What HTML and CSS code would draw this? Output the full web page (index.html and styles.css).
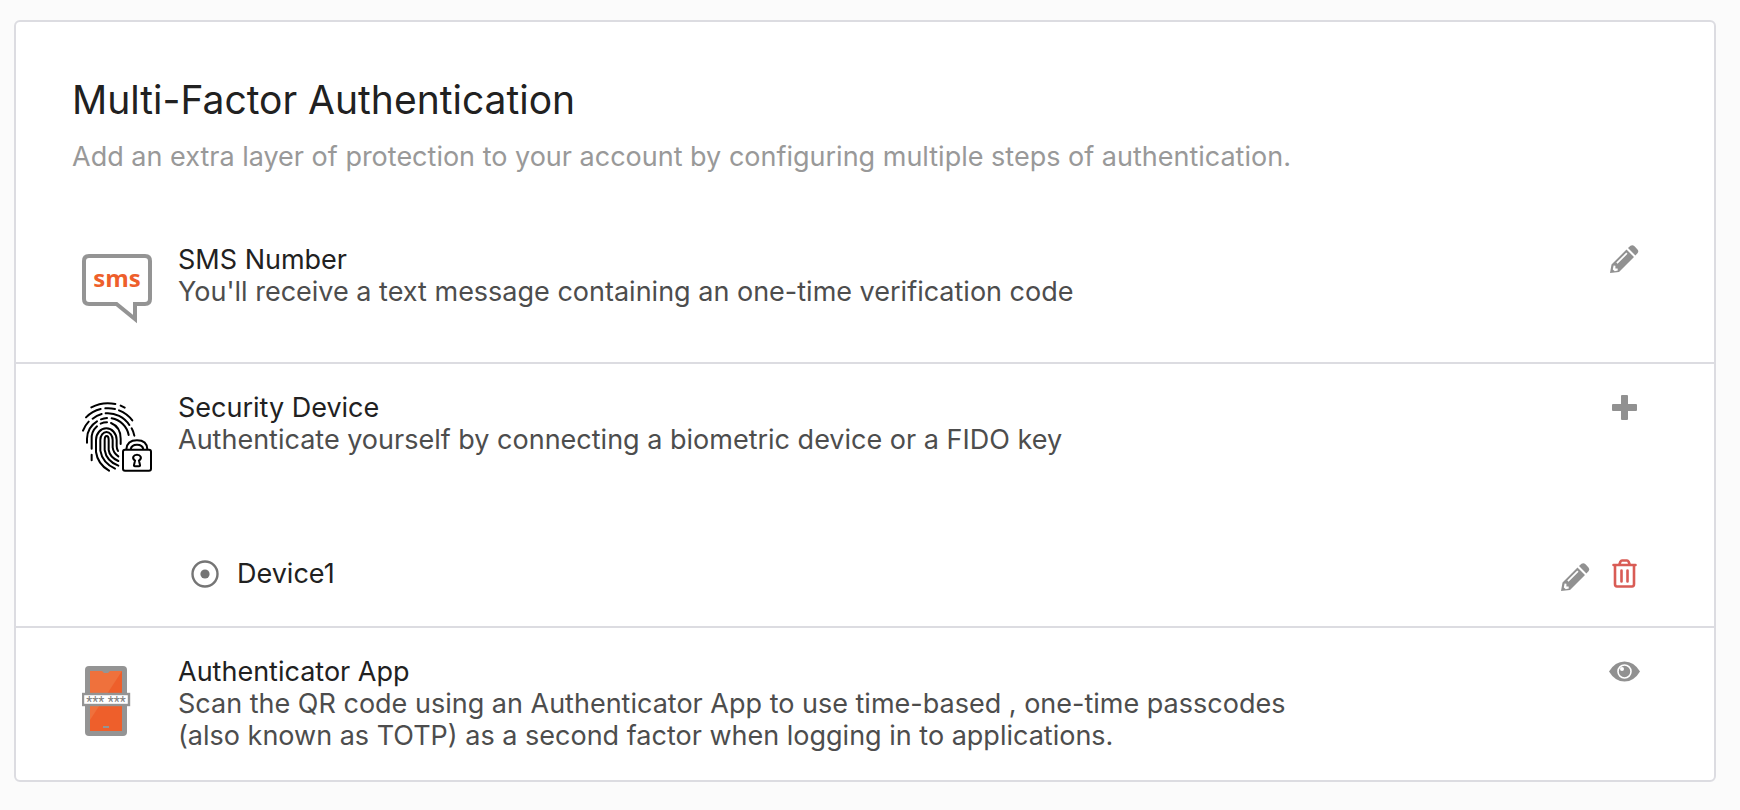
FILE: index.html
```html
<!DOCTYPE html>
<html lang="en">
<head>
<meta charset="utf-8">
<title>Multi-Factor Authentication</title>
<link rel="stylesheet" href="styles.css">
</head>
<body>
<main class="card">
  <header class="card-header">
    <h1 class="title">Multi-Factor Authentication</h1>
    <p class="subtitle">Add an extra layer of protection to your account by configuring multiple steps of authentication.</p>
  </header>

  <section class="factor">
    <div class="factor-main">
      <svg class="factor-icon" viewBox="0 0 70 70" aria-hidden="true">
        <path d="M7 2H63Q68 2 68 7V45Q68 50 63 50H53V65L34.500 50H7Q2 50 2 45V7Q2 2 7 2Z" fill="none" stroke="#949494" stroke-width="4"/>
        <text class="sms-label" x="35" y="33" text-anchor="middle">sms</text>
      </svg>
      <div class="factor-text">
        <h2 class="factor-name">SMS Number</h2>
        <p class="factor-desc">You'll receive a text message containing an one-time verification code</p>
      </div>
      <button class="action" type="button" aria-label="Edit SMS number">
        <svg viewBox="0 0 32 32" aria-hidden="true">
          <path fill="#919191" fill-rule="evenodd" d="M2 29L3.500 20.500L18.500 5.500L26 13L11 28L2 29ZM5.600 21.500L4.800 25.600L6.800 27.300L9.800 26.600L9.600 24.400L7.400 24.600L7.400 21.800ZM8.300 18.600L18.300 8.600L19.500 9.800L9.500 19.800ZM20 4L22.500 1.800Q24.500 0.500 26.500 2.200L29.500 5.400Q31 7.200 29.700 9L27.400 11.500Z"/>
        </svg>
      </button>
    </div>
  </section>

  <section class="factor">
    <div class="factor-main">
      <svg class="factor-icon" viewBox="36 36 210 210" aria-hidden="true">
        <g fill="none" stroke="#000" stroke-width="6" stroke-linecap="round">
          <path d="M64 52A107 107 0 0 1 136 42M152 47L164 53"/>
          <path d="M48 82A92 92 0 0 1 92 57M106 55A92 92 0 0 1 135 57M147 61A92 92 0 0 1 187 91"/>
          <path d="M39 122A77 77 0 0 1 56 95M68 86A77 77 0 0 1 95 72M107 70A77 77 0 0 1 178 105M185 115A77 77 0 0 1 193 137"/>
          <path d="M51 158V146A63 63 0 0 1 81 94M93 88A63 63 0 0 1 111 84M125 85A63 63 0 0 1 176 135"/>
          <path d="M65 194V211M65 176V150A49 49 0 0 1 81 109M92 101A49 49 0 0 1 111 97M123 99Q152 111 152 146V162"/>
          <path d="M78 150A31 35 0 0 1 140 150V168Q140 177 144 183M78 150V186Q83 222 117 242"/>
          <path d="M91 150A18.500 24 0 0 1 128 150V172Q130 189 145 199M91 150V182Q97 218 135 236"/>
          <path d="M104 150Q104 138 110 138Q116 138 116 150V180Q119 201 145 213M104 150V180Q109 213 145 227"/>
        </g>
        <rect x="153" y="174" width="94" height="72" fill="#fff"/>
        <path d="M169 178Q171 151 201 151Q231 151 232 178M182 178Q184 164 201 164Q218 164 220 178" fill="none" stroke="#000" stroke-width="6"/>
        <rect x="159" y="179" width="84" height="63" rx="6" fill="#fff" stroke="#000" stroke-width="6"/>
        <path d="M195 212C184 204 191 194 201 194S218 204 207 212L210 225Q211 229 207 229H195Q191 229 192 225Z" fill="none" stroke="#000" stroke-width="6"/>
      </svg>
      <div class="factor-text">
        <h2 class="factor-name">Security Device</h2>
        <p class="factor-desc">Authenticate yourself by connecting a biometric device or a FIDO key</p>
      </div>
      <button class="action" type="button" aria-label="Add security device">
        <svg viewBox="0 0 32 32" aria-hidden="true">
          <path fill="#919191" d="M14 3H19Q20 3 20 4V12H28Q29 12 29 13V18Q29 19 28 19H20V27Q20 28 19 28H14Q13 28 13 27V19H5Q4 19 4 18V13Q4 12 5 12H13V4Q13 3 14 3Z"/>
        </svg>
      </button>
    </div>
    <div class="device">
      <svg class="device-icon" viewBox="0 0 28 28" aria-hidden="true">
        <circle cx="14" cy="14" r="12.500" fill="none" stroke="#757575" stroke-width="2.400"/>
        <circle cx="14" cy="14" r="4.600" fill="#757575"/>
      </svg>
      <span class="device-name">Device1</span>
      <div class="device-actions">
        <button class="action" type="button" aria-label="Edit Device1">
          <svg viewBox="0 -4 32 32" aria-hidden="true">
            <path fill="#919191" fill-rule="evenodd" d="M1 29L2.500 20.500L17.500 5.500L25 13L10 28L1 29ZM4.600 21.500L3.800 25.600L5.800 27.300L8.800 26.600L8.600 24.400L6.400 24.600L6.400 21.800ZM7.300 18.600L17.300 8.600L18.500 9.800L8.500 19.800ZM19 4L21.500 1.800Q23.500 0.500 25.500 2.200L28.500 5.400Q30 7.200 28.700 9L26.400 11.500Z"/>
          </svg>
        </button>
        <button class="action" type="button" aria-label="Delete Device1">
          <svg viewBox="0 0 32 32" aria-hidden="true">
            <g fill="none" stroke="#d95c55" stroke-width="2.600" stroke-linecap="round" stroke-linejoin="round">
              <path d="M5.500 7H27.500M11.500 6L12.500 3.500Q13 2.500 14 2.500H19Q20 2.500 20.500 3.500L21.500 6"/>
              <path d="M7 8V26Q7 28.500 9 28.500H24Q26 28.500 26 26V8M13.500 12.500V23.500M19.500 12.500V23.500"/>
            </g>
          </svg>
        </button>
      </div>
    </div>
  </section>

  <section class="factor">
    <div class="factor-main">
      <svg class="factor-icon" viewBox="0 0 70 70" aria-hidden="true">
        <rect x="3" y="0" width="42" height="70" rx="4" fill="#949494"/>
        <path d="M8 5H40V65H8Z" fill="#ee5f2b"/>
        <path d="M8 5H40L8 54Z" fill="#ef713c"/>
        <path d="M20 5H28L26 7H22Z" fill="#949494"/>
        <rect x="21" y="60" width="6" height="2" fill="#949494"/>
        <rect x="1" y="28" width="46" height="11" fill="#fff" stroke="#949494" stroke-width="2.400"/>
        <text class="code-label" x="24" y="41" text-anchor="middle">*** ***</text>
      </svg>
      <div class="factor-text">
        <h2 class="factor-name">Authenticator App</h2>
        <p class="factor-desc">Scan the QR code using an Authenticator App to use time-based , one-time passcodes (also known as TOTP) as a second factor when logging in to applications.</p>
      </div>
      <button class="action" type="button" aria-label="View authenticator app">
        <svg viewBox="0 0 32 32" aria-hidden="true">
          <path fill="#919191" d="M1 15.500Q7 5.500 16.500 5.500T32 15.500Q26 25.500 16.500 25.500T1 15.500Z"/>
          <circle cx="16.500" cy="15.500" r="6.500" fill="#919191" stroke="#fff" stroke-width="1.600"/>
          <circle cx="14" cy="13" r="2" fill="#fff"/>
        </svg>
      </button>
    </div>
  </section>
</main>
</body>
</html>
```
FILE: styles.css
```css
* {
  box-sizing: border-box;
}

body {
  margin: 0;
  padding: 20px 24px 28px 14px;
  background: #fbfbfb;
  color: #212121;
  font-family: Inter, "Liberation Sans", sans-serif;
  font-size: 27px;
  line-height: 32px;
}

h1,
h2,
p {
  margin: 0;
  font-size: inherit;
  font-weight: 400;
}

.card {
  border: 2px solid #dcdce1;
  border-radius: 6px;
  background: #fff;
}

.card-header {
  padding: 52px 56px 43px;
}

.title {
  font-size: 39px;
  line-height: 52px;
}

.subtitle {
  padding-top: 15px;
  color: #999;
}

.factor {
  padding: 28px 74px 28px 56px;
}

.factor + .factor {
  border-top: 2px solid #dcdce1;
}

.factor-main {
  display: flex;
  align-items: flex-start;
}

.factor-icon {
  flex: none;
  width: 90px;
  height: 90px;
  padding: 10px;
}

.factor-text {
  flex: 1;
  padding: 0 16px;
}

.factor-desc {
  max-width: 1140px;
  color: #4d4d4d;
}

.sms-label {
  fill: #ee5f2b;
  font-family: "Open Sans", sans-serif;
  font-size: 24px;
  font-weight: 700;
}

.code-label {
  fill: #808080;
  font-family: Roboto, sans-serif;
  font-size: 14px;
}

.action {
  flex: none;
  width: 32px;
  height: 32px;
  padding: 0;
  border: 0;
  background: none;
  cursor: pointer;
}

.action svg {
  display: block;
  width: 32px;
  height: 32px;
  overflow: visible;
}

.device {
  display: flex;
  align-items: center;
  gap: 18px;
  padding: 76px 0 8px 119px;
}

.device-icon {
  flex: none;
  width: 28px;
  height: 28px;
}

.device-name {
  flex: 1;
}

.device-actions {
  display: flex;
  gap: 16px;
}
```
